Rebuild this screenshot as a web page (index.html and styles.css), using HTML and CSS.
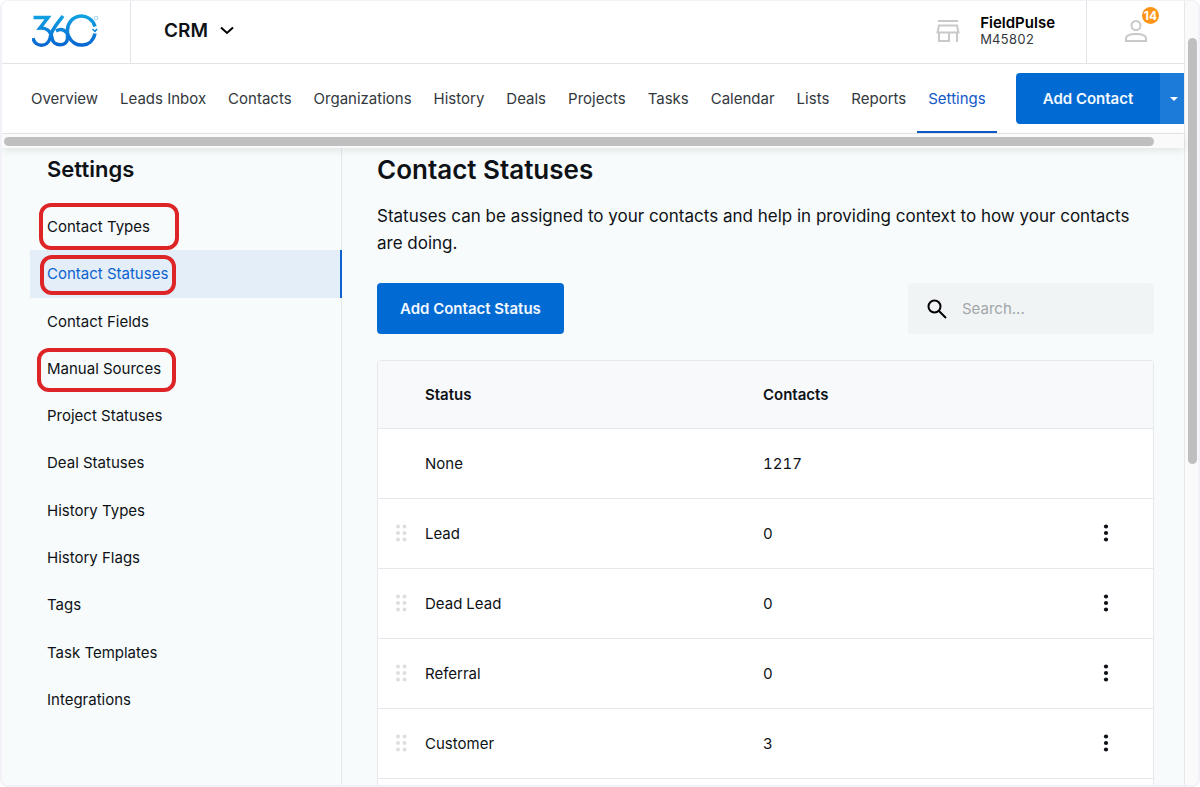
FILE: index.html
```html
<!DOCTYPE html>
<html lang="en">
<head>
  <meta charset="UTF-8">
  <meta name="viewport" content="width=device-width, initial-scale=1">
  <title>CRM - Contact Statuses</title>
  <link rel="stylesheet" href="styles.css">
</head>
<body>
  <svg class="sprite" aria-hidden="true">
    <symbol id="icon-more" viewBox="0 0 24 24">
      <circle cx="12" cy="5.5" r="2.1"/><circle cx="12" cy="12" r="2.1"/><circle cx="12" cy="18.5" r="2.1"/>
    </symbol>
    <symbol id="icon-drag" viewBox="0 0 12 20">
      <circle cx="3" cy="3.5" r="2"/><circle cx="9.5" cy="3.5" r="2"/>
      <circle cx="3" cy="10" r="2"/><circle cx="9.5" cy="10" r="2"/>
      <circle cx="3" cy="16.5" r="2"/><circle cx="9.5" cy="16.5" r="2"/>
    </symbol>
  </svg>

  <div class="window">
    <div class="app">
      <header class="topbar">
        <a class="logo" href="#" aria-label="360">
          <svg width="68" height="34" viewBox="0 0 68 34" fill="none">
            <defs>
              <linearGradient id="logoFill" gradientUnits="userSpaceOnUse" x1="0" y1="0" x2="0" y2="34">
                <stop offset="0" stop-color="#11a5e3"/>
                <stop offset="1" stop-color="#0662cf"/>
              </linearGradient>
            </defs>
            <g stroke="url(#logoFill)" stroke-width="3.5">
              <path d="M1.500 3.500h14.500L8 14c6-.5 11 3 12 10 1 9 15.500 9 15.500 0V17A14 14 0 0 1 63 12.500"/>
              <path d="M1 24c2 9.500 15 9.500 17 0C19 16 25 10 31 2"/>
              <path d="M24 17c6-3.500 11 0 12.500 5C42 35 60 34 63 19.500"/>
            </g>
            <path d="M60.500 15l2.500 2.500 2-2.500" stroke="url(#logoFill)" stroke-width="1.500"/>
            <circle cx="64" cy="4" r="1.800" stroke="#8cc8ec" stroke-width="0.800"/>
          </svg>
        </a>
        <button class="product" type="button">
          CRM
          <svg width="14" height="9" viewBox="0 0 14 9" fill="none" stroke="#000" stroke-width="2"><path d="M1 1.500l6 5.500 6-5.500"/></svg>
        </button>
        <div class="account">
          <svg width="24" height="22" viewBox="0 0 24 22" fill="none" stroke="#c9c9c9" stroke-width="2">
            <path d="M2 1h20M2 5.500h20M3 5.500L1.500 12.500h21L21 5.500M3 12.500V21h10v-8.500M21 12.500V22"/>
          </svg>
          <div>
            <div class="account-name">FieldPulse</div>
            <div class="account-id">M45802</div>
          </div>
        </div>
        <button class="user" type="button" aria-label="Profile, 14 notifications">
          <svg width="22" height="22" viewBox="0 0 22 22" fill="none" stroke="#c9c9c9" stroke-width="2">
            <circle cx="11" cy="5.500" r="4.500"/>
            <path d="M1 21v-2.500c0-3.500 6-4.500 10-4.500s10 1 10 4.500V21z"/>
          </svg>
          <span class="badge">14</span>
        </button>
      </header>

      <nav class="tabs">
        <a href="#">Overview</a>
        <a href="#">Leads Inbox</a>
        <a href="#">Contacts</a>
        <a href="#">Organizations</a>
        <a href="#">History</a>
        <a href="#">Deals</a>
        <a href="#">Projects</a>
        <a href="#">Tasks</a>
        <a href="#">Calendar</a>
        <a href="#">Lists</a>
        <a href="#">Reports</a>
        <a href="#" class="active">Settings</a>
        <div class="split-btn">
          <button class="btn" type="button">Add Contact</button>
          <button class="btn-arrow" type="button" aria-label="More add options"><svg width="8" height="4" viewBox="0 0 8 4" fill="#fff"><path d="M0 0h8L4 4z"/></svg></button>
        </div>
      </nav>
      <div class="scroll-x"><div class="scroll-thumb"></div></div>

      <div class="body">
        <aside class="sidebar">
          <h2>Settings</h2>
          <ul>
            <li><a href="#">Contact Types<span class="ring ring-types"></span></a></li>
            <li><a href="#" class="active">Contact Statuses<span class="ring ring-statuses"></span></a></li>
            <li><a href="#">Contact Fields</a></li>
            <li><a href="#">Manual Sources<span class="ring ring-sources"></span></a></li>
            <li><a href="#">Project Statuses</a></li>
            <li><a href="#">Deal Statuses</a></li>
            <li><a href="#">History Types</a></li>
            <li><a href="#">History Flags</a></li>
            <li><a href="#">Tags</a></li>
            <li><a href="#">Task Templates</a></li>
            <li><a href="#">Integrations</a></li>
          </ul>
        </aside>

        <main class="content">
          <h1>Contact Statuses</h1>
          <p>Statuses can be assigned to your contacts and help in providing context to how your contacts are doing.</p>
          <div class="toolbar">
            <button class="btn" type="button">Add Contact Status</button>
            <label class="search">
              <svg width="20" height="20" viewBox="0 0 20 20" fill="none" stroke="#000" stroke-width="2"><circle cx="7.500" cy="7.500" r="6"/><path d="M12 12l7 7"/></svg>
              <input type="text" placeholder="Search..." aria-label="Search statuses">
            </label>
          </div>
          <div class="table-card">
            <table>
              <thead>
                <tr><th class="col-drag"></th><th class="col-status">Status</th><th>Contacts</th><th class="col-more"></th></tr>
              </thead>
              <tbody>
                <tr><td></td><td>None</td><td>1217</td><td></td></tr>
                <tr>
                  <td class="drag"><svg width="12" height="20"><use href="#icon-drag"/></svg></td>
                  <td>Lead</td><td>0</td>
                  <td><button class="more" type="button" aria-label="Lead actions"><svg width="24" height="24"><use href="#icon-more"/></svg></button></td>
                </tr>
                <tr>
                  <td class="drag"><svg width="12" height="20"><use href="#icon-drag"/></svg></td>
                  <td>Dead Lead</td><td>0</td>
                  <td><button class="more" type="button" aria-label="Dead Lead actions"><svg width="24" height="24"><use href="#icon-more"/></svg></button></td>
                </tr>
                <tr>
                  <td class="drag"><svg width="12" height="20"><use href="#icon-drag"/></svg></td>
                  <td>Referral</td><td>0</td>
                  <td><button class="more" type="button" aria-label="Referral actions"><svg width="24" height="24"><use href="#icon-more"/></svg></button></td>
                </tr>
                <tr>
                  <td class="drag"><svg width="12" height="20"><use href="#icon-drag"/></svg></td>
                  <td>Customer</td><td>3</td>
                  <td><button class="more" type="button" aria-label="Customer actions"><svg width="24" height="24"><use href="#icon-more"/></svg></button></td>
                </tr>
                <tr><td></td><td></td><td></td><td></td></tr>
              </tbody>
            </table>
          </div>
        </main>
      </div>
    </div>
    <div class="scroll-y"><div class="scroll-thumb"></div></div>
  </div>
</body>
</html>
```
FILE: styles.css
```css
* { box-sizing: border-box; }

body {
  margin: 0;
  background: #fff;
  color: #0e1216;
  font-family: Inter, "Liberation Sans", sans-serif;
  font-size: 15px;
}

button, input { font: inherit; }

button {
  border: none;
  padding: 0;
  background: none;
  color: inherit;
  cursor: pointer;
}

a { color: inherit; text-decoration: none; }

svg { display: block; flex: none; }

.sprite { position: absolute; width: 0; height: 0; }

.window {
  display: flex;
  height: 100vh;
  border: 2px solid #f1f1f7;
  border-top-width: 1px;
  border-radius: 8px;
  overflow: hidden;
}

.app {
  flex: 1;
  min-width: 0;
  display: flex;
  flex-direction: column;
  background: #f7fbfc;
}

/* top bar */
.topbar {
  flex: none;
  display: flex;
  height: 63px;
  background: #fff;
  border-bottom: 1px solid #e4e4e8;
}

.logo {
  width: 129px;
  padding: 13px 0 0 30px;
  border-right: 1px solid #e4e4e8;
}

.product {
  display: flex;
  align-items: center;
  gap: 12px;
  margin-left: 33px;
  padding-bottom: 3px;
  font-size: 19px;
  font-weight: 600;
}

.account {
  display: flex;
  align-items: center;
  gap: 20px;
  margin-left: auto;
  padding: 0 31px 2px 0;
}

.account-name { font-weight: 600; line-height: 16px; color: #000; }

.account-id {
  font-size: 13px;
  line-height: 16px;
  font-variant-numeric: tabular-nums;
  color: #33383d;
}

.user {
  position: relative;
  width: 98px;
  padding: 0 0 2px 38px;
  border-left: 1px solid #e4e4e8;
}

.badge {
  position: absolute;
  top: 6px;
  left: 55px;
  width: 17px;
  border-radius: 9px;
  background: #ff9518;
  color: #fff;
  font-size: 12px;
  font-weight: 700;
  line-height: 17px;
  text-align: center;
}

/* tabs */
.tabs {
  flex: none;
  display: flex;
  align-items: center;
  height: 70px;
  padding-left: 18px;
  background: #fff;
  border-bottom: 1px solid #e9e9ec;
  overflow: hidden;
}

.tabs a {
  height: 69px;
  padding: 0 11px;
  border-bottom: 2px solid transparent;
  line-height: 69px;
  color: #33383d;
  white-space: nowrap;
}

.tabs a.active { color: #1259c8; border-color: #1259c8; }

.split-btn { display: flex; flex: none; margin-left: auto; }

.btn {
  height: 51px;
  padding: 0 23px;
  border-radius: 4px;
  background: #026bd3;
  color: #f2f8ff;
  font-weight: 600;
}

.split-btn .btn { width: 144px; border-radius: 4px 0 0 4px; }

.btn-arrow {
  display: flex;
  align-items: center;
  justify-content: flex-end;
  width: 24px;
  padding-right: 6px;
  background: #1c7ad8;
}

/* scrollbars */
.scroll-x {
  position: relative;
  z-index: 1;
  flex: none;
  padding: 3px 30px 2px 2px;
  background: #fafafa;
  box-shadow: 0 2px 8px rgba(0, 0, 0, 0.1);
}

.scroll-y {
  flex: none;
  width: 14px;
  padding: 37px 1px 0 3px;
  background: #fafafa;
  border-left: 1px solid #e8e8ea;
}

.scroll-thumb { height: 9px; border-radius: 5px; background: #bfbfbf; }
.scroll-y .scroll-thumb { height: 57%; }

/* page */
.body { flex: 1; display: flex; min-height: 0; overflow: hidden; }

.sidebar {
  flex: none;
  width: 340px;
  padding: 8px 0 0 28px;
  border-right: 1px solid #e4e6ea;
}

.sidebar h2 {
  margin: 0 0 21px 17px;
  font-size: 22px;
  line-height: 26px;
  font-weight: 600;
}

.sidebar ul {
  display: grid;
  min-height: 520px;
  margin: 0 -1px 0 0;
  padding: 0;
  list-style: none;
}

.sidebar li { display: grid; }

.sidebar li a {
  position: relative;
  display: flex;
  align-items: center;
  padding-left: 17px;
}

.sidebar a.active {
  background: #e4eef9;
  color: #0c62cf;
  border-right: 2px solid #0c62cf;
}

.ring {
  position: absolute;
  border: 4px solid #dd2427;
  border-radius: 12px;
}

.ring-types { left: 9px; top: 0; width: 140px; height: 47px; }
.ring-statuses { left: 10px; top: 5px; width: 136px; height: 40px; }
.ring-sources { left: 7px; top: 3px; width: 139px; height: 44px; }

.content { flex: 1; min-width: 0; padding: 5px 30px 0 35px; }

.content h1 {
  margin: 0 0 16px;
  font-size: 26px;
  line-height: 34px;
  font-weight: 600;
}

.content p {
  margin: 0 0 26px;
  font-size: 17px;
  line-height: 27px;
}

.toolbar {
  display: flex;
  justify-content: space-between;
  margin-bottom: 26px;
}

.search {
  display: flex;
  align-items: center;
  gap: 15px;
  width: 246px;
  padding: 0 19px;
  border-radius: 4px;
  background: #f1f4f5;
}

.search input {
  flex: 1;
  min-width: 0;
  padding: 0;
  border: none;
  outline: none;
  background: none;
}

.search input::placeholder { color: #a2a6a9; }

.table-card {
  border: 1px solid #e6e8eb;
  border-radius: 4px 4px 0 0;
  background: #fff;
  overflow: hidden;
}

table {
  width: 100%;
  border-collapse: collapse;
  table-layout: fixed;
  font-variant-numeric: tabular-nums;
}

th, td {
  height: 70px;
  padding: 0;
  border-bottom: 1px solid #e6e8eb;
  text-align: left;
}

th { height: 67px; background: #f8f9fb; font-weight: 600; }

.col-drag { width: 47px; }
.col-status { width: 338px; }
.col-more { width: 59px; }

.drag { padding-left: 17px; fill: #dedede; }

.more { display: block; }
.more svg { fill: #0e1216; }
```
